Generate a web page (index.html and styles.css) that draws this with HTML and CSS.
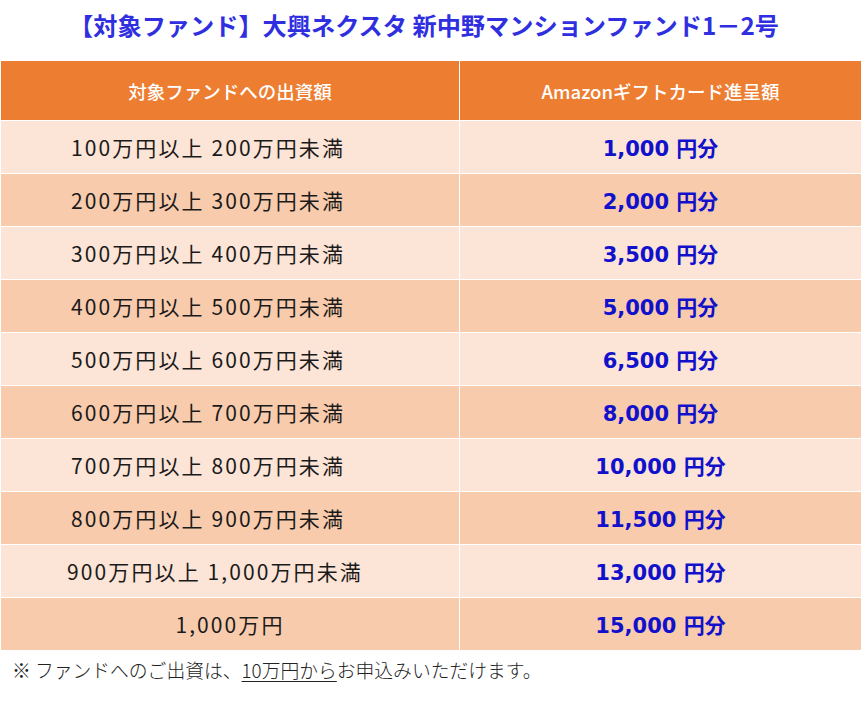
FILE: index.html
```html
<!DOCTYPE html>
<html lang="ja">
<head>
<meta charset="utf-8">
<link rel="stylesheet" href="styles.css">
</head>
<body>
<div class="page">
  <h1 class="title">【対象ファンド】大興ネクスタ 新中野マンションファンド1－2号</h1>
  <table class="gift">
    <thead>
      <tr><th class="c1">対象ファンドへの出資額</th><th class="c2">Amazonギフトカード進呈額</th></tr>
    </thead>
    <tbody>
      <tr class="odd"><td class="amt shift">100万円以上 200万円未満</td><td class="gift-val">1,000 円分</td></tr>
      <tr class="even"><td class="amt shift">200万円以上 300万円未満</td><td class="gift-val">2,000 円分</td></tr>
      <tr class="odd"><td class="amt shift">300万円以上 400万円未満</td><td class="gift-val">3,500 円分</td></tr>
      <tr class="even"><td class="amt shift">400万円以上 500万円未満</td><td class="gift-val">5,000 円分</td></tr>
      <tr class="odd"><td class="amt shift">500万円以上 600万円未満</td><td class="gift-val">6,500 円分</td></tr>
      <tr class="even"><td class="amt shift">600万円以上 700万円未満</td><td class="gift-val">8,000 円分</td></tr>
      <tr class="odd"><td class="amt shift">700万円以上 800万円未満</td><td class="gift-val">10,000 円分</td></tr>
      <tr class="even"><td class="amt shift">800万円以上 900万円未満</td><td class="gift-val">11,500 円分</td></tr>
      <tr class="odd"><td class="amt shift-sm">900万円以上 1,000万円未満</td><td class="gift-val">13,000 円分</td></tr>
      <tr class="even"><td class="amt">1,000万円</td><td class="gift-val">15,000 円分</td></tr>
    </tbody>
  </table>
  <p class="note">※ ファンドへのご出資は、<span class="ul">10万円から</span>お申込みいただけます。</p>
</div>
</body>
</html>
```
FILE: styles.css
```css
html, body {
  margin: 0;
  padding: 0;
  background: #ffffff;
}
.page {
  width: 862px;
}
.title {
  margin: 0;
  padding: 7px 0 0;
  height: 52px;
  box-sizing: border-box;
  line-height: 36px;
  text-align: center;
  font-family: "Noto Sans CJK JP", sans-serif;
  font-weight: 700;
  font-size: 24.2px;
  color: #2f2fe0;
  padding-right: 14px;
}
.gift {
  margin: 8px 0 0 1px;
  width: 860px;
  border-collapse: collapse;
  table-layout: fixed;
}
.gift th, .gift td {
  border: 1px solid #ffffff;
  padding: 0;
  text-align: center;
}
.gift th {
  background: #ed7d31;
  color: #ffffff;
  height: 59px;
  font-family: "Noto Sans CJK JP", sans-serif;
  font-weight: 500;
  font-size: 18.5px;
}
.gift .c1 { width: 458px; }
.gift td {
  height: 52px;
}
.gift tr:first-child td { border-top: 0; }
.gift tr:last-child td { border-bottom: 0; }
.gift th:first-child, .gift td:first-child { border-left: 0; }
.gift th:last-child, .gift td:last-child { border-right: 0; }
.odd td { background: #fce4d6; }
.even td { background: #f8cbad; }
.amt {
  color: #1a1a1a;
  font-family: "Noto Sans CJK JP", sans-serif;
  font-size: 21px;
  letter-spacing: 2.1px;
}
.shift { padding-right: 44px !important; }
.shift-sm { padding-right: 30px !important; }
.gift-val {
  color: #1111cc;
  font-family: "DejaVu Sans", "Noto Sans CJK JP", sans-serif;
  font-size: 21px;
  font-weight: 700;
}
.note {
  margin: 6px 0 0 12px;
  font-family: "Noto Sans CJK JP", sans-serif;
  font-size: 18.8px;
  font-weight: 300;
  line-height: 28px;
  color: #222222;
}
.ul { text-decoration: underline; text-underline-offset: 3px; }
```
